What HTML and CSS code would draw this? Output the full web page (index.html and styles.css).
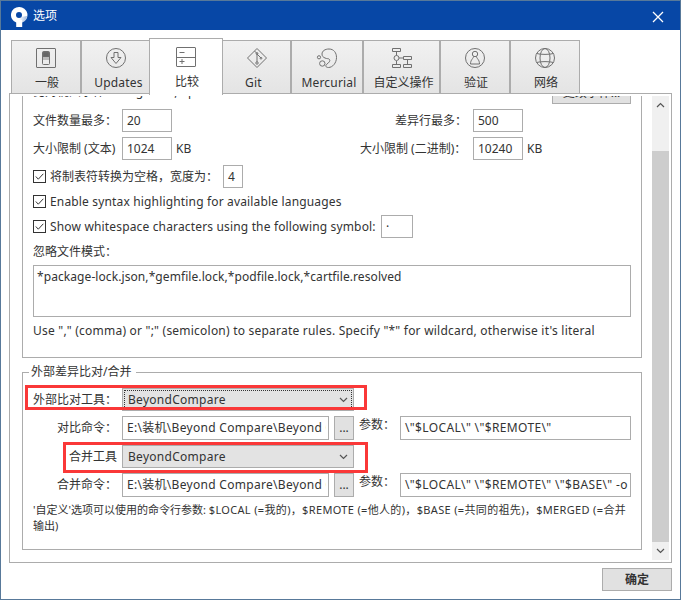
FILE: index.html
```html
<!DOCTYPE html>
<html lang="zh-CN">
<head>
<meta charset="utf-8">
<title>选项</title>
<link rel="stylesheet" href="styles.css">
</head>
<body>
<div class="window">
  <header class="titlebar">
    <svg class="logo" width="18" height="22" viewBox="0 0 18 22"><defs><linearGradient id="lg" x1="0" y1="0" x2="1" y2="0"><stop offset="0" stop-color="#0747a6" stop-opacity="0"/><stop offset="1" stop-color="#0747a6" stop-opacity=".4"/></linearGradient></defs><path d="M8 1a8 8 0 0 0-2.800 15.500V21h6v-4.500A8 8 0 0 0 8 1zm0 5a3 3 0 1 1 0 6 3 3 0 0 1 0-6z" fill="#fff" fill-rule="evenodd"/><path d="M10 11l6-1a8 8 0 0 1-5 6.500V14H8v-2z" fill="url(#lg)"/></svg>
    <span class="title">选项</span>
    <svg class="close" width="12" height="12" viewBox="0 0 12 12"><path d="M1 1l10 10M11 1L1 11" stroke="#fff" stroke-width="1.300" fill="none"/></svg>
  </header>
  <nav class="tabs">
    <div class="tab t1"><svg viewBox="0 0 22 22"><rect x="1.500" y="1.500" width="19" height="19" rx=".5"/><rect x="7.500" y="4.500" width="7" height="13" rx="1"/><path d="M8 5h6v5H8z" fill="#666"/><path d="M8 10h6v3H8z" fill="#bbb" stroke="none"/></svg><span>一般</span></div>
    <div class="tab t2"><svg viewBox="0 0 22 22"><circle cx="11" cy="11" r="9.500"/><path d="M9 5.500h4v5h3l-5 6-5-6h3z"/></svg><span class="lat">Updates</span></div>
    <div class="tab t3 active"><svg viewBox="0 0 22 22"><rect x="1.500" y="1.500" width="19" height="19" rx=".5"/><path d="M2 11.500h18M4.500 6.500h5M4.500 15.500h5M7 13v5"/></svg><span>比较</span></div>
    <div class="tab t4"><svg viewBox="0 0 22 22"><path d="M11 1.500l9.500 9.500-9.500 9.500L1.500 11zM8.500 4l2.500 2.500v8.500M11 7l4 4"/><circle cx="11" cy="16" r="1.200"/><circle cx="15" cy="11.200" r=".9"/><circle cx="11" cy="6.500" r=".9"/></svg><span class="lat">Git</span></div>
    <div class="tab t5"><svg viewBox="0 0 22 22"><path d="M6 7c0-3 3-5 7-5 5 0 7.500 4 7.500 8.500 0 5.500-4 10-8 10-3 0-3.500-2-1.500-3.500 2-1.500 3.500-3 2.500-4.500-1-1.300-2.500-.5-4.500-1.500-2-.8-3-2-3-4z"/><circle cx="6.300" cy="16.500" r="2.700"/><circle cx="3" cy="10.300" r="1.600"/></svg><span class="lat">Mercurial</span></div>
    <div class="tab t6"><svg viewBox="0 0 22 22"><path d="M1.500 1.500h8v3h-8zM1.500 17.500h8v3h-8zM12.500 9.500h8v3h-8zM12.500 17.500h8v3h-8zM5.500 4.500v4M5.500 14v3.500M8 11h4.500M16.500 12.500v5"/><circle cx="5.500" cy="11" r="2.500"/></svg><span>自定义操作</span></div>
    <div class="tab t7"><svg viewBox="0 0 22 22"><circle cx="11" cy="11" r="9.500"/><circle cx="11" cy="7" r="2.700"/><path d="M9.500 9.500c0 2-3 3-3 7.500h9c0-4.500-3-5.500-3-7.500"/></svg><span>验证</span></div>
    <div class="tab t8"><svg viewBox="0 0 22 22"><circle cx="11" cy="11" r="9.500"/><ellipse cx="11" cy="11" rx="5" ry="9.500"/><path d="M2.500 6.500c4 1.200 13 1.200 17 0M2.500 15.500c4-1.200 13-1.200 17 0"/></svg><span>网络</span></div>
  </nav>
  <main class="panel">
    <div class="content">
      <section class="group diff">
        <div class="row clipped"><span class="c0">比对视图字体：</span><span class="font-name lat">Segoe UI, 9pt</span><button class="btn change">更改字体...</button></div>
        <div class="row r1"><span class="c0">文件数量最多：</span><span class="field w50">20</span><span class="right-label">差异行最多：</span><span class="field w50">500</span></div>
        <div class="row r2"><span class="c0">大小限制 (文本)</span><span class="field w50">1024</span><span class="unit">KB</span><span class="right-label binary">大小限制 (二进制)：</span><span class="field w50">10240</span><span class="unit">KB</span></div>
        <div class="row r3"><svg class="check" viewBox="0 0 13 13"><rect x=".5" y=".5" width="12" height="12"/><path d="M2.800 6.500l2.500 2.700 5-5.400"/></svg><span class="tabw">将制表符转换为空格，宽度为：</span><span class="field w20">4</span></div>
        <div class="row r4"><svg class="check" viewBox="0 0 13 13"><rect x=".5" y=".5" width="12" height="12"/><path d="M2.800 6.500l2.500 2.700 5-5.400"/></svg><span class="option">Enable syntax highlighting for available languages</span></div>
        <div class="row r5"><svg class="check" viewBox="0 0 13 13"><rect x=".5" y=".5" width="12" height="12"/><path d="M2.800 6.500l2.500 2.700 5-5.400"/></svg><span class="option symbol">Show whitespace characters using the following symbol:</span><span class="field w32">·</span></div>
        <div class="row r6">忽略文件模式：</div>
        <div class="area">*package-lock.json,*gemfile.lock,*podfile.lock,*cartfile.resolved</div>
        <div class="row hint">Use "," (comma) or ";" (semicolon) to separate rules. Specify "*" for wildcard, otherwise it's literal</div>
      </section>
      <section class="group tools">
        <h2 class="legend">外部差异比对/合并</h2>
        <div class="row combo-row"><span class="label">外部比对工具：</span><div class="combo focused"><span class="tool">BeyondCompare</span><svg viewBox="0 0 9 6"><path d="M1 1l3.500 3.500L8 1"/></svg></div><i class="mark mark-diff"></i></div>
        <div class="row cmd-row"><span class="label">对比命令：</span><span class="field path"><span class="clip">E:\装机\Beyond Compare\Beyond C</span></span><button class="btn dots">...</button><span class="args">参数：</span><span class="field arg">\"$LOCAL\" \"$REMOTE\"</span></div>
        <div class="row combo-row"><span class="label">合并工具</span><div class="combo"><span class="tool">BeyondCompare</span><svg viewBox="0 0 9 6"><path d="M1 1l3.500 3.500L8 1"/></svg></div><i class="mark mark-merge"></i></div>
        <div class="row cmd-row"><span class="label">合并命令：</span><span class="field path"><span class="clip">E:\装机\Beyond Compare\Beyond C</span></span><button class="btn dots">...</button><span class="args">参数：</span><span class="field arg">\"$LOCAL\" \"$REMOTE\" \"$BASE\" -o</span></div>
        <p class="note">'自定义'选项可以使用的命令行参数: <span class="vars">$LOCAL (=我的)，$REMOTE (=他人的)，$BASE (=共同的祖先)，$MERGED (=合并</span><br>输出)</p>
      </section>
    </div>
    <div class="scrollbar"><svg viewBox="0 0 9 6"><path d="M1 5l3.500-3.500L8 5"/></svg><div class="thumb"></div><svg viewBox="0 0 9 6"><path d="M1 1l3.500 3.500L8 1"/></svg></div>
  </main>
  <footer class="footer"><button class="btn ok">确定</button></footer>
</div>
</body>
</html>
```
FILE: styles.css
```css
* { box-sizing: border-box; }
body { margin: 0; font: 12px/16px "Noto Sans", "Noto Sans CJK SC", sans-serif; color: #333; background: #fff; }
.window { width: 681px; height: 600px; border: 1px solid #58799a; background: #fff; overflow: hidden; }
.titlebar { height: 29px; display: flex; align-items: center; background: #0747a6; color: #fff; padding: 0 16px 0 10px; }
.logo { margin-top: 2px; }
.title { margin-left: 4px; }
.close { margin-left: auto; margin-top: 2px; }
.tabs { height: 64px; display: flex; align-items: flex-end; padding-left: 10px; }
.tab { height: 54px; border: 1px solid #acacac; background: linear-gradient(#f1f1f1, #e4e4e4); display: flex; flex-direction: column; align-items: center; padding-top: 6px; white-space: nowrap; }
.tab svg { width: 22px; height: 22px; flex: none; fill: none; stroke: #707070; stroke-width: 1; }
.tab span { margin-top: 6px; }
.t1 { width: 70px; }
.t1 span { margin-left: 2px; }
.t2 { width: 69px; border-right: 0; padding-left: 5px; }
.t2 svg { margin-left: -5px; }
.t3 { width: 74px; margin-left: -1px; }
.t3 span { margin-left: 2px; }
.t4 { width: 68px; border-left: 0; }
.t4 span { margin-right: 6px; }
.t5 { width: 72px; }
.t5 span { margin-left: 4px; }
.t6 { width: 77px; }
.t6 span { margin-left: 4px; }
.t7 { width: 70px; }
.t7 span { margin-left: 2px; }
.t8 { width: 70px; }
.t8 span { margin-left: 2px; }
.tab.active { height: 57px; background: #fff; border-bottom: 0; margin-bottom: -1px; padding-top: 7px; position: relative; z-index: 1; }
.lat { letter-spacing: .2px; }
.panel { height: 470px; width: 663px; margin: -1px 0 0 8px; border: 1px solid #acacac; padding: 2px; display: flex; justify-content: space-between; }
.content { width: 630px; height: 464px; overflow: hidden; padding-left: 10px; }
.group { width: 620px; border: 1px solid #acacac; padding-left: 10px; }
.diff { height: 262px; border-top: 0; }
.row { display: flex; align-items: center; white-space: nowrap; position: relative; }
.field { height: 23px; border: 1px solid #acacac; padding: 0 4px; line-height: 21px; display: block; overflow: hidden; background: #fff; flex: none; white-space: nowrap; }
.btn { font: inherit; color: inherit; background: #e1e1e1; border: 1px solid #acacac; padding: 0; border-radius: 0; }
.c0 { width: 89px; flex: none; }
.w50 { width: 50px; }
.w20 { width: 20px; }
.w32 { width: 32px; }
.clipped { height: 8px; align-items: flex-end; }
.clipped .c0, .font-name { margin-bottom: 4px; }
.change { width: 79px; height: 23px; margin-left: auto; margin-right: 10px; flex: none; }
.r1 { height: 23px; margin-top: 5px; }
.right-label { margin-left: 223px; width: 78px; }
.r2 { height: 23px; margin-top: 5px; }
.unit { margin-left: 4px; width: 17px; }
.right-label.binary { margin-left: 167px; width: 113px; }
.r3 { height: 23px; margin-top: 5px; }
.check { width: 13px; height: 13px; margin-right: 4px; flex: none; fill: none; stroke: #333; stroke-width: 1; }
.tabw { width: 173px; }
.option { letter-spacing: .16px; }
.r4 { height: 25px; margin-top: 1px; }
.r5 { height: 25px; }
.symbol { width: 331px; }
.r6 { height: 25px; }
.area { width: 598px; height: 52px; margin-top: 1px; border: 1px solid #acacac; padding: 3px; letter-spacing: .08px; }
.hint { height: 28px; letter-spacing: .22px; }
.tools { height: 178px; margin-top: 14px; }
.legend { font: inherit; margin: -9px 0 0 -4px; padding: 0 4px 0 2px; width: 107px; height: 17px; background: #fff; white-space: nowrap; }
.combo-row { height: 23px; margin-top: 7px; }
.combo-row ~ .combo-row { margin-top: 5px; }
.label { width: 89px; text-align: right; flex: none; padding-right: 5px; }
.combo { width: 232px; height: 23px; border: 1px solid #acacac; background: #e3e3e3; display: flex; align-items: center; justify-content: space-between; padding: 0 5px; }
.combo.focused { outline: 1px dotted #333; outline-offset: -3px; }
.tool { letter-spacing: .28px; }
.combo svg, .scrollbar svg { width: 9px; height: 6px; fill: none; stroke: #555; stroke-width: 1.2; flex: none; }
.mark { position: absolute; border: 3px solid #fa3838; }
.mark-diff { left: -8px; top: -3px; width: 342px; height: 25px; }
.mark-merge { left: 30px; top: -3px; width: 305px; height: 31px; }
.cmd-row { height: 24px; margin-top: 5px; }
.cmd-row .field { height: 24px; line-height: 22px; }
.path { width: 207px; letter-spacing: .3px; }
.clip { display: block; overflow: hidden; margin-right: -2px; }
.dots { width: 20px; height: 24px; margin-left: 5px; }
.args { width: 46px; padding-left: 5px; margin-bottom: 6px; }
.arg { width: 231px; padding-right: 0; letter-spacing: .36px; }
.note { margin: 5px 0 0; font-size: 11px; line-height: 16px; white-space: nowrap; }
.vars { letter-spacing: .34px; }
.scrollbar { width: 17px; height: 464px; background: #f0f0f0; display: flex; flex-direction: column; align-items: center; padding: 6px 0; }
.thumb { width: 17px; height: 392px; background: #cdcdcd; margin: 43px 0 6px; }
.footer { padding: 5px 8px 0 0; display: flex; justify-content: flex-end; }
.ok { width: 70px; height: 23px; font-weight: 700; }
```
